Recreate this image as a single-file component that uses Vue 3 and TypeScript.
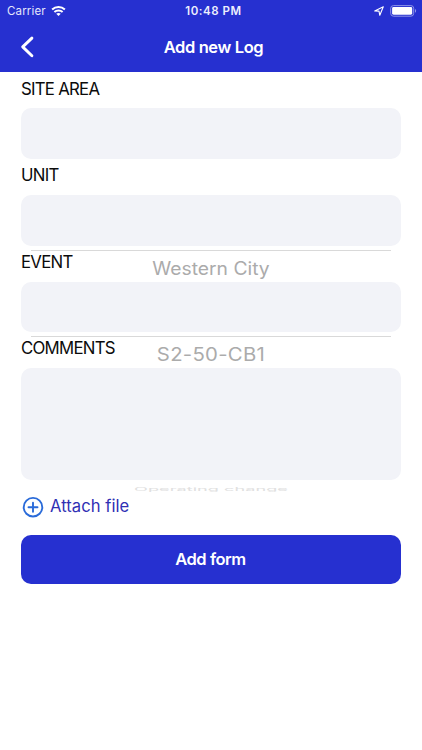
<script setup lang="ts">
interface Field {
  id: string
  label: string
  multiline?: boolean
  picked?: string
}

const fields: Field[] = [
  { id: 'site', label: 'SITE AREA' },
  { id: 'unit', label: 'UNIT' },
  { id: 'event', label: 'EVENT', picked: 'Western City' },
  { id: 'comments', label: 'COMMENTS', picked: 'S2-50-CB1', multiline: true },
]
</script>

<template>
  <div class="screen">
    <header class="header">
      <div class="status">
        <div class="status-left">
          <span class="carrier">Carrier</span>
          <svg class="wifi" width="15" height="12" viewBox="0 0 16 12">
            <g fill="none" stroke="#fff" stroke-width="2.1">
              <path d="M1.2 4.4C5 .7 11 .7 14.8 4.4" />
              <path d="M3.6 7.1C6 4.8 10 4.8 12.4 7.1" />
            </g>
            <path d="M8 11.3L5.6 8.9C6.9 7.7 9.1 7.7 10.4 8.9Z" fill="#fff" />
          </svg>
        </div>
        <span class="clock">10:48 PM</span>
        <div class="status-right">
          <svg width="10" height="10" viewBox="0 0 10 10">
            <path d="M.7 5L9.3 .8L5.8 9.3L5 5.1Z" fill="none" stroke="#fff" stroke-width="1.1" stroke-linejoin="round" />
          </svg>
          <svg width="27" height="12" viewBox="0 0 27 12">
            <rect x=".7" y=".6" width="23" height="10.6" rx="2.8" fill="none" stroke="#8f94e8" stroke-width="1" />
            <rect x="2.1" y="2.1" width="20.1" height="7.6" rx="1.4" fill="#fff" />
            <path d="M25 4.1C26.5 4.5 26.5 7.3 25 7.7Z" fill="#8f94e8" />
          </svg>
        </div>
      </div>
      <div class="nav">
        <button class="back" aria-label="Back">
          <svg width="14" height="22" viewBox="0 0 14 22">
            <path d="M11.9 2.1L2.7 10.9L11.9 19.7" fill="none" stroke="#fff" stroke-width="2.9" stroke-linecap="round" stroke-linejoin="round" />
          </svg>
        </button>
        <h1 class="title">Add new Log</h1>
      </div>
    </header>

    <main class="form">
      <div v-for="field in fields" :key="field.id" class="field">
        <div class="label-row" :class="{ ruled: field.picked }">
          <label class="label">{{ field.label }}</label>
          <span v-if="field.picked" :class="['picked', 'picked-' + field.id]">{{ field.picked }}</span>
        </div>
        <div class="input" :class="{ multiline: field.multiline }"></div>
      </div>

      <div class="attach">
        <svg width="22" height="22" viewBox="0 0 22 22">
          <g fill="none" stroke="#2a6bd9" stroke-width="1.9" stroke-linecap="round">
            <circle cx="11" cy="11.2" r="9.3" />
            <path d="M11 6.7V15.7M6.5 11.2H15.5" />
          </g>
        </svg>
        <span class="attach-text">Attach file</span>
        <span class="fading">Operating change</span>
      </div>

      <button class="submit"><span>Add form</span></button>
    </main>
  </div>
</template>

<style>
body {
  margin: 0;
  background: #fff;
}
</style>

<style scoped>
.screen {
  height: 750px;
  overflow: hidden;
  background: #fff;
  font-family: Inter, "Liberation Sans", sans-serif;
}
.header {
  height: 72.4px;
  background: #2630d0;
  color: #fff;
}
.status {
  display: grid;
  grid-template-columns: 1fr auto 1fr;
  align-items: center;
  height: 22px;
  padding: 0 5px 0 7px;
}
.status-left {
  display: flex;
  align-items: center;
  gap: 5px;
}
.carrier {
  font-size: 11.5px;
  letter-spacing: 0.15px;
  color: #e4e6fb;
}
.clock {
  padding-left: 3px;
  font-size: 11.5px;
  font-weight: 600;
  letter-spacing: 0.55px;
  color: #eceefd;
}
.status-right {
  display: flex;
  align-items: center;
  justify-content: flex-end;
  gap: 6px;
}
.nav {
  display: grid;
  grid-template-columns: 60px 1fr 60px;
  align-items: center;
  height: 50px;
}
.back {
  display: flex;
  padding: 0 0 0 20px;
  border: 0;
  background: none;
}
.title {
  margin: 0;
  padding-left: 5px;
  font-size: 16.5px;
  font-weight: 600;
  letter-spacing: -0.38px;
  text-align: center;
}
.form {
  padding: 0 21px;
}
.label-row {
  position: relative;
  display: flex;
  align-items: center;
  height: 36px;
}
.label {
  height: 27.6px;
  line-height: 24px;
  font-size: 16.8px;
  letter-spacing: -0.75px;
  color: #0b0b0b;
}
.ruled::before {
  content: "";
  position: absolute;
  top: 4px;
  left: 10px;
  right: 10px;
  height: 1px;
  background: #d9d9d9;
}
.picked {
  position: absolute;
  top: 11px;
  left: 0;
  right: 0;
  line-height: 24px;
  text-align: center;
  font-size: 18px;
  color: #ababab;
}
.picked-event {
  transform: scaleX(1.07);
}
.picked-comments {
  letter-spacing: 0.25px;
  transform: scaleX(1.13);
}
.input {
  height: 50.6px;
  border-radius: 10px;
  background: #f2f3f8;
}
.input.multiline {
  height: 112px;
}
.attach {
  position: relative;
  display: flex;
  align-items: center;
  gap: 6px;
  height: 54.6px;
  padding-left: 1px;
}
.attach-text {
  padding-bottom: 2px;
  font-size: 16.6px;
  letter-spacing: 0.05px;
  color: #3030b4;
}
.fading {
  position: absolute;
  top: 6px;
  left: 0;
  right: 0;
  height: 6px;
  line-height: 6px;
  text-align: center;
  font-size: 18.2px;
  color: #e0e0e0;
  transform: scaleY(0.28);
}
.submit {
  display: block;
  width: 100%;
  height: 49px;
  padding: 0 1px 0 0;
  border: 0;
  border-radius: 10px;
  background: #2630d0;
  color: #fff;
  font-family: inherit;
  font-size: 16.5px;
  font-weight: 600;
  letter-spacing: -0.45px;
}
</style>
